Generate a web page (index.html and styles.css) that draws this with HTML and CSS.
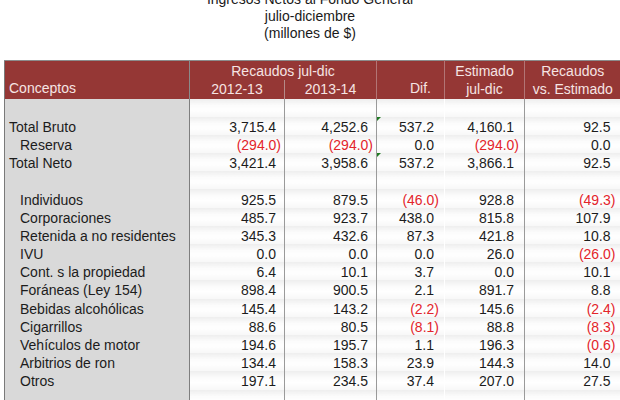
FILE: index.html
```html
<!DOCTYPE html>
<html lang="es">
<head>
<meta charset="utf-8">
<title>Ingresos Netos al Fondo General</title>
<link rel="stylesheet" href="styles.css">
</head>
<body>
<div class="titles">
  <div>Ingresos Netos al Fondo General</div>
  <div>julio-diciembre</div>
  <div>(millones de $)</div>
</div>
<table class="sheet">
  <colgroup>
    <col class="c-lbl"><col class="c-a"><col class="c-b"><col class="c-d"><col class="c-e"><col class="c-f">
  </colgroup>
  <thead>
    <tr class="h1">
      <th rowspan="2" class="h-lbl">Conceptos</th>
      <th colspan="2" class="h-group">Recaudos jul-dic</th>
      <th rowspan="2" class="h-dif">Dif.</th>
      <th class="h-c">Estimado</th>
      <th class="h-c h-last">Recaudos</th>
    </tr>
    <tr class="h2">
      <th class="h-c h-split">2012-13</th>
      <th class="h-c">2013-14</th>
      <th class="h-c">jul-dic</th>
      <th class="h-c h-last">vs. Estimado</th>
    </tr>
  </thead>
  <tbody>
    <tr><td class="lbl"></td><td></td><td></td><td></td><td></td><td></td></tr>
    <tr><td class="lbl">Total Bruto</td><td>3,715.4</td><td>4,252.6</td><td class="flag">537.2</td><td>4,160.1</td><td>92.5</td></tr>
    <tr><td class="lbl ind">Reserva</td><td class="neg">(294.0)</td><td class="neg">(294.0)</td><td>0.0</td><td class="neg">(294.0)</td><td>0.0</td></tr>
    <tr><td class="lbl">Total Neto</td><td>3,421.4</td><td>3,958.6</td><td class="flag">537.2</td><td>3,866.1</td><td>92.5</td></tr>
    <tr><td class="lbl"></td><td></td><td></td><td></td><td></td><td></td></tr>
    <tr><td class="lbl ind">Individuos</td><td>925.5</td><td>879.5</td><td class="neg">(46.0)</td><td>928.8</td><td class="neg">(49.3)</td></tr>
    <tr><td class="lbl ind">Corporaciones</td><td>485.7</td><td>923.7</td><td>438.0</td><td>815.8</td><td>107.9</td></tr>
    <tr><td class="lbl ind">Retenida a no residentes</td><td>345.3</td><td>432.6</td><td>87.3</td><td>421.8</td><td>10.8</td></tr>
    <tr><td class="lbl ind">IVU</td><td>0.0</td><td>0.0</td><td>0.0</td><td>26.0</td><td class="neg">(26.0)</td></tr>
    <tr><td class="lbl ind">Cont. s la propiedad</td><td>6.4</td><td>10.1</td><td>3.7</td><td>0.0</td><td>10.1</td></tr>
    <tr><td class="lbl ind">Foráneas (Ley 154)</td><td>898.4</td><td>900.5</td><td>2.1</td><td>891.7</td><td>8.8</td></tr>
    <tr><td class="lbl ind">Bebidas alcohólicas</td><td>145.4</td><td>143.2</td><td class="neg">(2.2)</td><td>145.6</td><td class="neg">(2.4)</td></tr>
    <tr><td class="lbl ind">Cigarrillos</td><td>88.6</td><td>80.5</td><td class="neg">(8.1)</td><td>88.8</td><td class="neg">(8.3)</td></tr>
    <tr><td class="lbl ind">Vehículos de motor</td><td>194.6</td><td>195.7</td><td>1.1</td><td>196.3</td><td class="neg">(0.6)</td></tr>
    <tr><td class="lbl ind">Arbitrios de ron</td><td>134.4</td><td>158.3</td><td>23.9</td><td>144.3</td><td>14.0</td></tr>
    <tr><td class="lbl ind">Otros</td><td>197.1</td><td>234.5</td><td>37.4</td><td>207.0</td><td>27.5</td></tr>
    <tr><td class="lbl"></td><td></td><td></td><td></td><td></td><td></td></tr>
  </tbody>
</table>
</body>
</html>
```
FILE: styles.css
```css
html, body {
  margin: 0;
  padding: 0;
  background: #ffffff;
  overflow: hidden;
}
body {
  width: 620px;
  height: 400px;
  font-family: "Liberation Sans", Arial, sans-serif;
  font-size: 14px;
  color: #1c1c1c;
}
.titles {
  margin-top: -9px;
  height: 69px;
  line-height: 17px;
  text-align: center;
  color: #1a1a1a;
}
.sheet {
  margin-left: 4px;
  width: 616px;
  table-layout: fixed;
  border-collapse: collapse;
  border-spacing: 0;
}
.c-lbl { width: 185px; }
.c-a { width: 95px; }
.c-b { width: 92px; }
.c-d { width: 68px; }
.c-e { width: 80px; }
.c-f { width: 96px; }

thead th {
  box-sizing: border-box;
  background: #953735;
  color: #f6e4e3;
  font-weight: normal;
  padding: 0;
  height: 19px;
  line-height: 16px;
  border-left: 1px solid #b27575;
  border-right: 1px solid #b27575;
  vertical-align: middle;
}
.h1 th { border-top: 1px solid #8c8c8c; padding-top: 2px; }
.h2 th { padding-bottom: 1px; }
.h-lbl {
  text-align: left;
  vertical-align: bottom;
  padding: 0 0 3px 4px;
  border-left: 1px solid #7a7a7a;
  border-right: 1px solid #8a8a8a;
}
.h1 th.h-lbl, .h1 th.h-dif { padding-top: 0; padding-bottom: 3px; }
.h-group { text-align: center; }
.h-dif {
  text-align: right;
  vertical-align: bottom;
  padding: 0 13px 3px 0;
}
.h-c { text-align: center; }
.h-last { border-right: none; }
.h-split { border-right: 1px solid #b58a88; }

tbody td {
  height: 18.2px;
  padding: 2px 5px 0 0;
  line-height: 16px;
  text-align: right;
  white-space: nowrap;
  background: linear-gradient(to bottom, #eeeeee 0%, #fbfbfb 35%, #ffffff 60%, #f7f7f7 100%);
  border-right: 1px solid #9a9a9a;
  box-sizing: border-box;
}
tbody td:nth-child(2),
tbody td:nth-child(3) { padding-right: 8px; }
tbody td:nth-child(4),
tbody td:nth-child(5),
tbody td:nth-child(6) { padding-right: 10px; }
tbody td.neg { color: #e3242b; padding-right: 3px; }
tbody td:nth-child(n+4).neg { padding-right: 5px; }
tbody td:nth-child(4) { border-right: 1px solid #ffffff; }
tbody td:nth-child(6) { border-right: none; }
tbody td.lbl {
  background: #d9d9d9;
  text-align: left;
  padding: 2px 0 0 4px;
  border-left: 1px solid #7a7a7a;
  border-right: 1px solid #7f7f7f;
}
tbody td.lbl.ind { padding-left: 15px; }
td.flag { position: relative; }
td.flag::before {
  content: "";
  position: absolute;
  left: 0;
  top: 0;
  border-top: 4px solid #1f7a22;
  border-right: 4px solid transparent;
}
```
